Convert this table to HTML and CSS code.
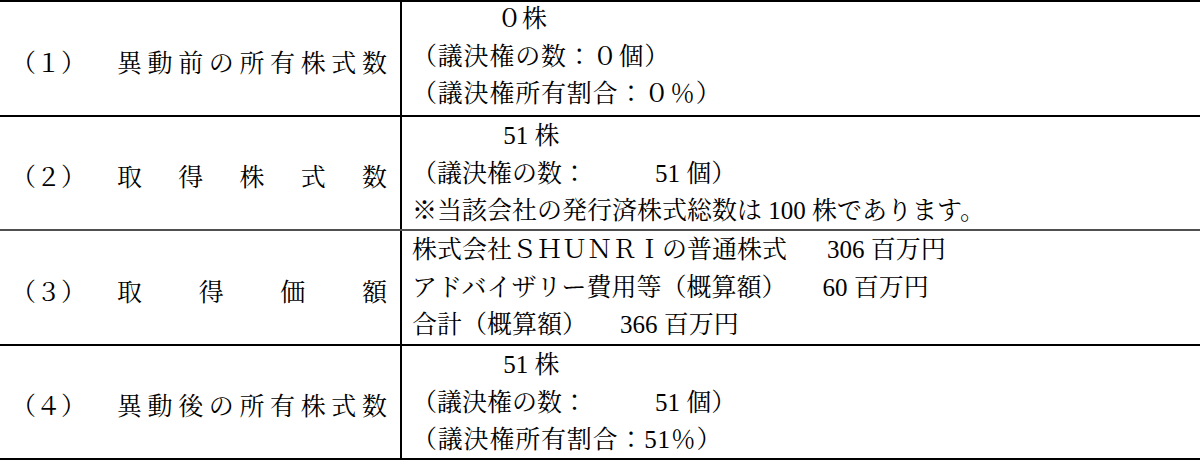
FILE: index.html
```html
<!DOCTYPE html>
<html lang="ja">
<head>
<meta charset="utf-8">
<link rel="stylesheet" href="styles.css">
</head>
<body>
<div class="tbl">
  <div class="row r1">
    <div class="head"><span class="no">（１）</span><span class="label"><span>異</span><span>動</span><span>前</span><span>の</span><span>所</span><span>有</span><span>株</span><span>式</span><span>数</span></span></div>
    <div class="body">
      <div class="line ind">　　　０株</div>
      <div class="line wide">（議決権の数：０個）</div>
      <div class="line wide">（議決権所有割合：０％）</div>
    </div>
  </div>
  <div class="row r2">
    <div class="head"><span class="no">（２）</span><span class="label"><span>取</span><span>得</span><span>株</span><span>式</span><span>数</span></span></div>
    <div class="body">
      <div class="line ind">　　　 51 株</div>
      <div class="line">（議決権の数：<span class="gap g68"></span>51 個）</div>
      <div class="line">※当該会社の発行済株式総数は 100 株であります。</div>
    </div>
  </div>
  <div class="row r3">
    <div class="head"><span class="no">（３）</span><span class="label"><span>取</span><span>得</span><span>価</span><span>額</span></span></div>
    <div class="body">
      <div class="line">株式会社ＳＨＵＮＲＩの普通株式<span class="gap g40"></span>306 百万円</div>
      <div class="line">アドバイザリー費用等（概算額）<span class="gap g36"></span>60 百万円</div>
      <div class="line">合計（概算額）<span class="gap g33"></span>366 百万円</div>
    </div>
  </div>
  <div class="row r4">
    <div class="head"><span class="no">（４）</span><span class="label"><span>異</span><span>動</span><span>後</span><span>の</span><span>所</span><span>有</span><span>株</span><span>式</span><span>数</span></span></div>
    <div class="body">
      <div class="line ind">　　　 51 株</div>
      <div class="line">（議決権の数：<span class="gap g68"></span>51 個）</div>
      <div class="line wide">（議決権所有割合：51％）</div>
    </div>
  </div>
</div>
</body>
</html>
```
FILE: styles.css
```css
html, body {
  margin: 0;
  padding: 0;
  background: #fff;
}
body {
  font-family: "Liberation Serif", "Noto Serif CJK JP", "Noto Sans CJK JP", serif;
  font-size: 25px;
  color: #000;
  width: 1200px;
  height: 460px;
  overflow: hidden;
}
.tbl {
  display: flex;
  flex-direction: column;
  border-bottom: 2px solid #000;
  width: 1220px;
}
.row {
  display: grid;
  grid-template-columns: 400px 1fr;
  border-top: 2px solid #000;
}
.r1 { height: 113px; }
.r2 { height: 112px; }
.r3 { height: 113px; border-top-color: #505050; }
.r4 { height: 112px; }
.head {
  display: flex;
  align-items: center;
  padding-left: 11px;
  padding-top: 4px;
}
.no {
  width: 106px;
  flex: none;
}
.label {
  width: 270px;
  display: flex;
  justify-content: space-between;
}
.body {
  border-left: 2px solid #000;
  padding-left: 10px;
}
.line {
  white-space: pre;
  line-height: 37.5px;
}
.ind { padding-left: 10px; }
.wide { letter-spacing: 0.8px; }
.gap { display: inline-block; }
.g33 { width: 33px; }
.g36 { width: 36px; }
.g40 { width: 40px; }
.g68 { width: 68px; }
.r1 .body { margin-top: -2px; }
```
